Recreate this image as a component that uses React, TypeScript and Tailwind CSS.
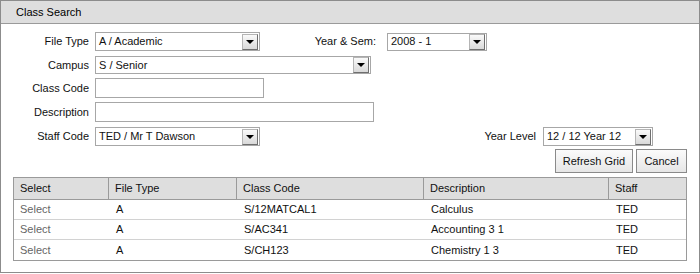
import React from 'react';

interface SelectBoxProps {
  value: string;
  width: string;
  height: string;
}

const SelectBox: React.FC<SelectBoxProps> = ({ value, width, height }) => (
  <div className={`flex items-center border border-[#a7a7a7] bg-white ${width} ${height}`}>
    <span className="flex-1 pl-[3px] truncate text-[#111]">{value}</span>
    <span className="mr-[1px] flex h-[16px] w-[16px] items-center justify-center border border-[#b5b5b5] border-r-[#6f6f6f] border-b-[#6f6f6f] bg-gradient-to-b from-[#fafafa] to-[#d9d9d9]">
      <span className="h-0 w-0 border-x-[4px] border-t-[4px] border-x-transparent border-t-black" />
    </span>
  </div>
);

const TextBox: React.FC<{ width: string }> = ({ width }) => (
  <div className={`h-[20px] border border-[#a7a7a7] bg-white ${width}`} />
);

const Label: React.FC<{ text: string; width?: string }> = ({ text, width = 'w-[88px]' }) => (
  <span className={`${width} shrink-0 text-right text-[#111]`}>{text}</span>
);

const rows = [
  { code: 'S/12MATCAL1', desc: 'Calculus' },
  { code: 'S/AC341', desc: 'Accounting 3 1' },
  { code: 'S/CH123', desc: 'Chemistry 1 3' },
];

export default function App() {
  return (
    <div className="h-[273px] w-[700px] border border-[#8c8c8c] bg-white font-['Liberation_Sans',Arial,sans-serif] text-[11px] leading-none">
      <div className="flex h-[23px] items-center border-b border-[#9a9a9a] bg-[#dedede] pl-[15px] text-[11px] text-black">
        Class Search
      </div>

      <div className="flex flex-col">
        <div className="mt-[8px] flex items-center">
          <Label text="File Type" />
          <div className="ml-[6px]">
            <SelectBox value="A / Academic" width="w-[165px]" height="h-[19px]" />
          </div>
          <Label text="Year & Sem:" width="w-[116px]" />
          <div className="ml-[11px]">
            <SelectBox value="2008 - 1" width="w-[100px]" height="h-[18px]" />
          </div>
        </div>

        <div className="mt-[5px] flex items-center">
          <Label text="Campus" />
          <div className="ml-[6px]">
            <SelectBox value="S / Senior" width="w-[276px]" height="h-[18px]" />
          </div>
        </div>

        <div className="mt-[4px] flex items-center">
          <Label text="Class Code" />
          <div className="ml-[6px]">
            <TextBox width="w-[169px]" />
          </div>
        </div>

        <div className="mt-[4px] flex items-center">
          <Label text="Description" />
          <div className="ml-[6px]">
            <TextBox width="w-[279px]" />
          </div>
        </div>

        <div className="mt-[5px] flex items-center">
          <Label text="Staff Code" />
          <div className="ml-[6px]">
            <SelectBox value="TED / Mr T Dawson" width="w-[165px]" height="h-[19px]" />
          </div>
          <Label text="Year Level" width="w-[276px]" />
          <div className="ml-[7px]">
            <SelectBox value="12 / 12 Year 12" width="w-[110px]" height="h-[19px]" />
          </div>
        </div>

        <div className="mr-[12px] mt-[3px] flex justify-end gap-[3px]">
          <button className="h-[24px] w-[78px] border border-[#8a8a8a] bg-gradient-to-b from-[#fbfbfb] to-[#e6e6e6] text-[#111]">
            Refresh Grid
          </button>
          <button className="h-[24px] w-[51px] border border-[#8a8a8a] bg-gradient-to-b from-[#fbfbfb] to-[#e6e6e6] text-[#111]">
            Cancel
          </button>
        </div>

        <div className="mx-[12px] mt-[4px] border border-[#9a9a9a]">
          <div className="flex h-[22px] items-center border-b border-[#9a9a9a] bg-[#dedede] text-[#111]">
            <div className="flex h-full w-[95px] items-center border-r border-[#9a9a9a] pl-[6px]">Select</div>
            <div className="flex h-full w-[128px] items-center border-r border-[#9a9a9a] pl-[6px]">File Type</div>
            <div className="flex h-full w-[187px] items-center border-r border-[#9a9a9a] pl-[6px]">Class Code</div>
            <div className="flex h-full w-[185px] items-center border-r border-[#9a9a9a] pl-[6px]">Description</div>
            <div className="flex h-full flex-1 items-center pl-[6px]">Staff</div>
          </div>
          {rows.map((r, i) => (
            <div
              key={r.code}
              className={`flex h-[20px] items-center text-[#111] ${i < rows.length - 1 ? 'border-b border-[#d2d2d2]' : ''}`}
            >
              <div className="w-[95px] pl-[6px] text-[#666]">Select</div>
              <div className="w-[128px] pl-[7px]">A</div>
              <div className="w-[187px] pl-[7px]">{r.code}</div>
              <div className="w-[185px] pl-[7px]">{r.desc}</div>
              <div className="flex-1 pl-[7px]">TED</div>
            </div>
          ))}
        </div>
      </div>
    </div>
  );
}
